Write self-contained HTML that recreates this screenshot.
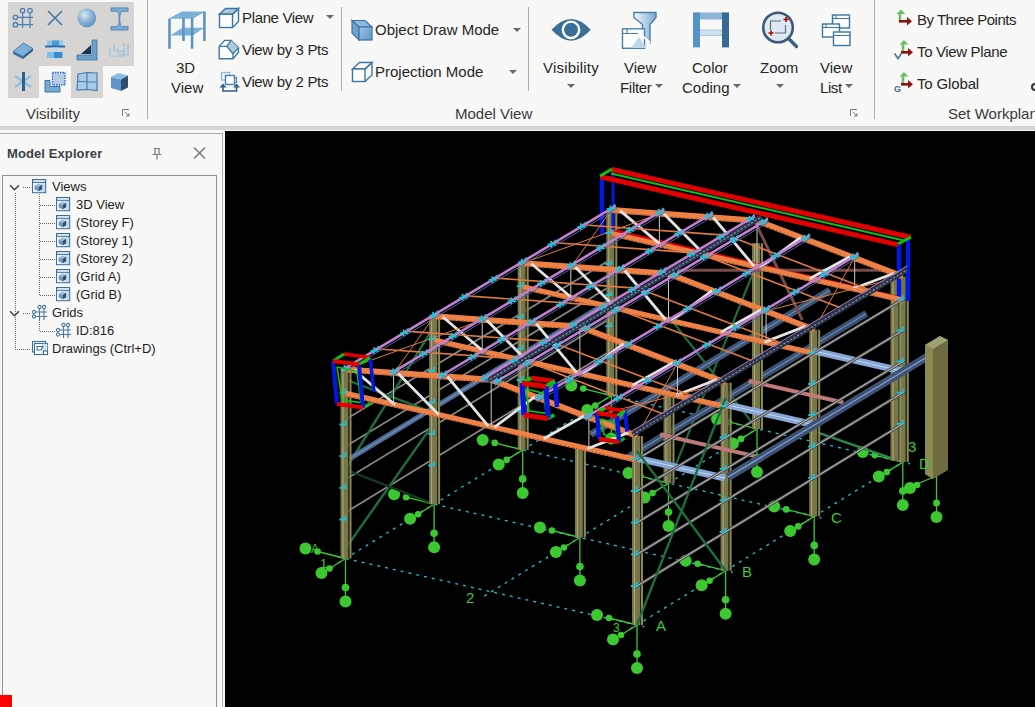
<!DOCTYPE html>
<html><head><meta charset="utf-8">
<style>
*{margin:0;padding:0;box-sizing:border-box}
html,body{width:1035px;height:707px;overflow:hidden;background:#f8f8f6;font-family:"Liberation Sans",sans-serif;color:#262626}
.a{position:absolute;white-space:nowrap}
.t{position:absolute;white-space:nowrap;font-size:15px;line-height:15px;color:#262626}
.lbl{position:absolute;white-space:nowrap;font-size:15px;line-height:15px;color:#3b3b3b}
.sep{position:absolute;width:1px;background:#ababab}
.arr{position:absolute;width:0;height:0;margin-left:-0.5px;border-left:4px solid transparent;border-right:4px solid transparent;border-top:4.5px solid #6a6a6a}
svg{position:absolute;overflow:visible}
</style></head><body>
<!-- RIBBON -->
<div class="a" style="left:0;top:0;width:1035px;height:126px;background:#f8f8f6"></div>
<div class="a" style="left:0;top:126px;width:1035px;height:4px;background:#d5d5d4"></div>
<!-- visibility gray grid -->
<div class="a" style="left:8px;top:2px;width:126px;height:64px;background:#d6d5d4"></div>
<div class="a" style="left:8px;top:66px;width:31px;height:32px;background:#d6d5d4"></div>
<div class="a" style="left:71px;top:66px;width:32px;height:32px;background:#d6d5d4"></div>
<div id="visicons"><svg width="1035" height="130" style="left:0;top:0">
<defs>
<radialGradient id="sph" cx="0.38" cy="0.35" r="0.7"><stop offset="0" stop-color="#dcebf6"/><stop offset="0.5" stop-color="#8fb6d8"/><stop offset="1" stop-color="#5d8fbd"/></radialGradient>
<linearGradient id="cubeg" x1="0" y1="0" x2="1" y2="1"><stop offset="0" stop-color="#9cc4e2"/><stop offset="1" stop-color="#5d94c4"/></linearGradient>
<linearGradient id="fun" x1="0" y1="0" x2="1" y2="0"><stop offset="0" stop-color="#f4f8fb"/><stop offset="0.6" stop-color="#a9c9e2"/><stop offset="1" stop-color="#7aa9d0"/></linearGradient>
</defs>
<!-- grid icon -->
<g stroke="#4c82b2" stroke-width="1.3" fill="none">
<path d="M22.6,12.8v15.2M30,12.8v15.2M17.6,17.3H33M17.6,24.7H33"/>
<circle cx="22.6" cy="10.6" r="2.2"/><circle cx="30" cy="10.6" r="2.2"/>
<circle cx="15.4" cy="17.3" r="2.2"/><circle cx="15.4" cy="24.7" r="2.2"/>
</g>
<!-- X -->
<path d="M48,11L62,25M62,11L48,25" stroke="#3f78a8" stroke-width="1.6"/>
<!-- sphere -->
<circle cx="86.8" cy="17.8" r="9.4" fill="url(#sph)"/>
<!-- I beam -->
<path d="M111,8h17v3.2h-6.2q-2,1.5 -2,6v4q0,4.5 2,5.5h6.2v3.3h-17v-3.3h6.2q2,-1 2,-5.5v-4q0,-4.5 -2,-6h-6.2z" fill="#7eacd4" stroke="#4f86b6" stroke-width="1"/>
<!-- slab -->
<path d="M13,51.5L23.5,43L33,48.5L23,56.5Z" fill="#7fb0d8" stroke="#3f73a0" stroke-width="0.8"/>
<path d="M13,51.5L23,56.5L23,59L13,54Z" fill="#3c6f9e"/>
<path d="M23,56.5L33,48.5L33,51L23,59Z" fill="#2f5f8c"/>
<!-- plate T -->
<rect x="47" y="40.5" width="16" height="6" fill="#8cc4ec"/>
<rect x="52" y="40.5" width="7" height="6" fill="#4a9ad8"/>
<rect x="45" y="45.5" width="20" height="2" fill="#2a6aa6"/>
<rect x="53" y="47.5" width="5" height="12" fill="#b8d8f0"/>
<rect x="47" y="52" width="16" height="6" fill="#7cc0ea"/>
<rect x="54" y="52" width="8" height="6" fill="#3a8ad0"/>
<!-- angle -->
<path d="M92,40h5v20h-20v-5h15z" fill="#6fa0cc" stroke="#3f74a4" stroke-width="0.8"/>
<path d="M81,54L91,45V54Z" fill="#1d3450"/>
<!-- channels -->
<g stroke="#9ec0dc" stroke-width="1.2" fill="none">
<path d="M110,48v8h14v-3M124,47v-4M128,43v12h-6"/>
<path d="M114,45v6h10M118,48v6h6v-6"/>
</g>
<!-- asterisk -->
<path d="M15,76L31,87M15,87L31,76" stroke="#8ec0e2" stroke-width="2.6"/>
<path d="M23.5,72v19" stroke="#2f5e86" stroke-width="3"/>
<!-- L with dotted -->
<path d="M45,80.5h5v6h10v5.5h-15z" fill="#79a9d2" stroke="#3e72a2" stroke-width="1"/>
<rect x="52.5" y="72.5" width="12.5" height="12.5" fill="#b5cde2" stroke="#2a6ad0" stroke-width="1.3" stroke-dasharray="1.5 1"/>
<!-- window panes -->
<path d="M78,74L87,72.5L97,73L97,90.5L87,89.5L77,90Z" fill="#a7cbe6" stroke="#4a7aa8" stroke-width="1.2"/>
<path d="M87,72.5V89.5M77.5,81.5L97,82" stroke="#4a7aa8" stroke-width="1.2"/>
<!-- cube -->
<path d="M111,77L118,73L128,75.5L121,79.5Z" fill="#8cbde0"/>
<path d="M111,77L121,79.5L121,91L111,88Z" fill="#5e97c7"/>
<path d="M121,79.5L128,75.5L128,87.5L121,91Z" fill="#2e4e70"/>

<!-- 3D view big icon -->
<g fill="#5b95c6">
<path d="M168.2,18.8L182,11.4H205.6L192.6,18.8Z" fill="#7bb0d9"/>
<path d="M170.5,35.6L182.2,27.8H204.3L192.6,35.6Z" fill="#7bb0d9"/>
<rect x="182.2" y="18" width="2.6" height="23"/>
<rect x="203.1" y="11.4" width="2.6" height="29.6"/>
<rect x="168.2" y="18.8" width="2.6" height="30"/>
<rect x="190.8" y="18" width="2.6" height="30.7"/>
</g>
<!-- plane view cube -->
<g stroke="#3b76a6" stroke-width="1.4" fill="none">
<path d="M225.5,8.5H238.5L232.5,14.2H219.5Z" fill="#b2cade"/>
<rect x="219.5" y="14.2" width="13" height="13.3" fill="#fff"/>
<path d="M232.5,14.2L238.5,8.5V21.5L232.5,27.5"/>
</g>
<!-- view by 3 pts -->
<path d="M219.2,46.4L224.6,40.4H231L238.5,47.9V52.2L233,58.8H219.2Z" fill="#fff" stroke="#3b76a6" stroke-width="1.4"/>
<path d="M226.8,46.4L231,40.4L238.5,47.9L233,53.8Z" fill="#b2cade"/>
<path d="M219.2,46.4H226.8L233,53.8V58.8M233,53.8L238.5,47.9M226.8,46.4L231,40.4" fill="none" stroke="#3b76a6" stroke-width="1.3"/>
<!-- view by 2 pts -->
<rect x="221.5" y="72.5" width="8" height="7.5" fill="none" stroke="#8fb6d8" stroke-width="1.3"/>
<rect x="225.5" y="75.5" width="9" height="9" fill="#fff" stroke="#4a82b4" stroke-width="1.4"/>
<path d="M234.5,77.5h2v5h-2" fill="none" stroke="#4a82b4" stroke-width="1.2"/>
<path d="M223,86V91H236.5V86" fill="none" stroke="#2f5f88" stroke-width="1.6"/>
<path d="M219.5,87.5L223,83.5L226.5,87.5ZM233,87.5L236.5,83.5L240,87.5Z" fill="#2f5f88"/>
<!-- object draw mode cube -->
<path d="M352,20.5H365L372,27H359Z" fill="#8dbbe0" stroke="#3d75a8" stroke-width="1.2"/>
<path d="M352,20.5L359,27V40L352,33Z" fill="#6ea4d0" stroke="#3d75a8" stroke-width="1.2"/>
<rect x="359" y="27" width="13" height="13" fill="url(#cubeg)" stroke="#3d75a8" stroke-width="1.2"/>
<!-- projection mode cube -->
<g stroke="#3d75a8" stroke-width="1.4" fill="none">
<path d="M352.5,69L359.5,62.5H372L365,69Z" fill="#fff"/>
<rect x="352.5" y="69" width="12.5" height="12.5" fill="#fff"/>
<path d="M365,69L372,62.5V75L365,81.5"/>
</g>
<!-- eye -->
<path d="M551.5,29.8Q571,8 590.8,29.8Q571,51.5 551.5,29.8Z" fill="#3a6f98"/>
<circle cx="571" cy="29.8" r="8.2" fill="none" stroke="#fff" stroke-width="2.4"/>
<circle cx="571" cy="29.8" r="5.3" fill="#3a6f98"/>
<!-- view filter -->
<path d="M634,12.5H656V17.5L650,24.5V42.5L642.5,36V24.5L634,17.5Z" fill="url(#fun)" stroke="#4a80ae" stroke-width="1.4"/>
<rect x="622.5" y="28.8" width="22" height="19.5" fill="#fff" stroke="#4a80ae" stroke-width="1.4"/>
<path d="M622.5,33.5H638M627,28.8V33.5" stroke="#4a80ae" stroke-width="1.2"/>
<path d="M631,48L639,37L646,48Z" fill="#bcd8ec"/>
<path d="M642.5,36L650,42.5" stroke="#fff" stroke-width="2"/>
<!-- color coding -->
<rect x="699" y="12.5" width="24" height="7" fill="#8cb4d6"/>
<rect x="699" y="30" width="24" height="5.5" fill="#cfe0ee" stroke="#9ebfdc" stroke-width="0.8"/>
<rect x="693" y="12.4" width="7" height="35" fill="#5592c8"/>
<rect x="722" y="12.4" width="7" height="35" fill="#3a6a94"/>
<!-- zoom -->
<path d="M787.5,37.5L796.5,46.5" stroke="#3d5f80" stroke-width="3.4" stroke-linecap="round"/>
<circle cx="778" cy="27.5" r="14.8" fill="#dde9f3" stroke="#3d5a78" stroke-width="2.6"/>
<path d="M770.5,30V21H781M785.5,25V33H775" fill="none" stroke="#6b6b6b" stroke-width="1.2"/>
<path d="M783.5,19.5h5M786,17v5M768.5,33h5M771,30.5v5" stroke="#c00000" stroke-width="1.6"/>
<!-- view list -->
<g stroke="#3a75a8" stroke-width="1.4" fill="#fff">
<rect x="832.5" y="15" width="17" height="13"/>
<path d="M832.5,18.5h17M836,15v3.5" fill="none" stroke-width="1"/>
<rect x="822.5" y="24" width="17" height="13"/>
<path d="M822.5,27.5h17M826,24v3.5" fill="none" stroke-width="1"/>
<rect x="833.5" y="32" width="16.5" height="13.5"/>
<path d="M833.5,35.5h16.5" fill="none" stroke-width="1"/>
</g>
<!-- workplane icons -->
<g>
<path d="M900,21.5V13.5" stroke="#6cbf6c" stroke-width="2.6"/><path d="M896.5,14L901,9.5L905.5,14Z" fill="#6cbf6c"/>
<path d="M899,21.3H908" stroke="#8c1212" stroke-width="2.6"/><path d="M907,17L912,21.3L907,25.6Z" fill="#8c1212"/>
<path d="M903,52V44" stroke="#6cbf6c" stroke-width="2.6"/><path d="M899.5,44.5L904,40L908.5,44.5Z" fill="#6cbf6c"/>
<path d="M901,52.3H909" stroke="#8c1212" stroke-width="2.6"/><path d="M908,48L913,52.3L908,56.6Z" fill="#8c1212"/>
<path d="M894.5,53.5L898,58.5L901.5,53.5" stroke="#4676a6" stroke-width="1.6" fill="none"/>
<path d="M903,84V76" stroke="#6cbf6c" stroke-width="2.6"/><path d="M899.5,76.5L904,72L908.5,76.5Z" fill="#6cbf6c"/>
<path d="M901,84.3H909" stroke="#8c1212" stroke-width="2.6"/><path d="M908,80L913,84.3L908,88.6Z" fill="#8c1212"/>
<text x="894" y="91.5" font-size="9" font-weight="bold" fill="#3d6a98" font-family="Liberation Sans">G</text>
</g>
<!-- dialog launchers -->
<g stroke="#7a7a7a" stroke-width="1" fill="none">
<path d="M122.5,116V109.5H129"/><path d="M125,112L129,116M126,116H129V113"/>
<path d="M850.5,116V109.5H857"/><path d="M853,112L857,116M854,116H857V113"/>
</g>
</svg>
</div><!--/icons-->
<div class="lbl" style="left:26px;top:106px">Visibility</div>
<div class="sep" style="left:147px;top:0;height:119px"></div>
<div class="sep" style="left:341px;top:7px;height:84px"></div>
<div class="sep" style="left:528px;top:7px;height:84px"></div>
<div class="sep" style="left:874px;top:0;height:119px"></div>

<div class="t" style="left:176px;top:60px">3D</div>
<div class="t" style="left:171px;top:80px">View</div>
<div class="t" style="left:242px;top:10px;letter-spacing:-0.35px">Plane View</div>
<div class="arr" style="left:326px;top:15px"></div>
<div class="t" style="left:242px;top:42px;letter-spacing:-0.35px">View by 3 Pts</div>
<div class="t" style="left:242px;top:74px;letter-spacing:-0.35px">View by 2 Pts</div>

<div class="t" style="left:375px;top:22px">Object Draw Mode</div>
<div class="arr" style="left:513px;top:28px"></div>
<div class="t" style="left:375px;top:64px">Projection Mode</div>
<div class="arr" style="left:509px;top:70px"></div>
<div class="lbl" style="left:455px;top:106px">Model View</div>

<div class="t" style="left:543px;top:60px;letter-spacing:0.2px">Visibility</div>
<div class="arr" style="left:567px;top:84px"></div>
<div class="t" style="left:624px;top:60px">View</div>
<div class="t" style="left:620px;top:80px;letter-spacing:-0.3px">Filter</div>
<div class="arr" style="left:655px;top:84px"></div>
<div class="t" style="left:692px;top:60px">Color</div>
<div class="t" style="left:682px;top:80px">Coding</div>
<div class="arr" style="left:733px;top:84px"></div>
<div class="t" style="left:760px;top:60px">Zoom</div>
<div class="arr" style="left:776px;top:84px"></div>
<div class="t" style="left:820px;top:60px">View</div>
<div class="t" style="left:820px;top:80px;letter-spacing:-0.4px">List</div>
<div class="arr" style="left:845px;top:84px"></div>

<div class="t" style="left:917px;top:12px;letter-spacing:-0.5px">By Three Points</div>
<div class="t" style="left:917px;top:44px;letter-spacing:-0.35px">To View Plane</div>
<div class="t" style="left:917px;top:76px;letter-spacing:-0.15px">To Global</div>
<div class="lbl" style="left:948px;top:106px">Set Workplane</div>
<div class="a" style="left:1031px;top:83px;width:8px;height:8px;border:2px solid #333;border-radius:50%"></div>

<!-- EXPLORER -->
<div class="a" style="left:0;top:133px;width:223px;height:574px;border-top:1px solid #a9a9a9;border-right:1px solid #b0b0b0"></div>
<div class="a" style="left:7px;top:146px;font-size:13px;font-weight:bold;color:#3b414a;letter-spacing:0.1px">Model Explorer</div>
<div class="a" style="left:2px;top:175px;width:215px;height:540px;border:1px solid #8d9096;background:#f8f8f6"></div>
<div id="tree"><svg width="230" height="380" style="left:0;top:0"><defs><linearGradient id="tvg" x1="0" y1="0" x2="1" y2="0"><stop offset="0" stop-color="#fff"/><stop offset="1" stop-color="#bcd6ea"/></linearGradient></defs><path d="M10,185.2L14.5,189.7L19,185.2" stroke="#444" stroke-width="1.5" fill="none"/>
<path d="M23,187.5H31" stroke="#6a6a6a" stroke-width="1" stroke-dasharray="1 1"/>
<g transform="translate(32,179.0)">
<rect x="0.6" y="0.6" width="13" height="13" fill="#fff" stroke="#3b6f99" stroke-width="1.2"/>
<rect x="1.2" y="3.6" width="12" height="9.6" fill="url(#tvg)"/>
<path d="M1,3.3H13.4" stroke="#3b6f99" stroke-width="1.1"/>
<path d="M2.6,6.6L6.2,4.6L10.2,5.8L6.6,7.9Z" fill="#9cbdd8"/>
<path d="M2.6,6.6L6.6,7.9V12.2L2.6,10.6Z" fill="#6a98bf"/>
<path d="M6.6,7.9L10.2,5.8V10.2L6.6,12.2Z" fill="#2f4d6c"/>
</g>
<path d="M40,205.5H55" stroke="#6a6a6a" stroke-width="1" stroke-dasharray="1 1"/>
<g transform="translate(56,197.0)">
<rect x="0.6" y="0.6" width="13" height="13" fill="#fff" stroke="#3b6f99" stroke-width="1.2"/>
<rect x="1.2" y="3.6" width="12" height="9.6" fill="url(#tvg)"/>
<path d="M1,3.3H13.4" stroke="#3b6f99" stroke-width="1.1"/>
<path d="M2.6,6.6L6.2,4.6L10.2,5.8L6.6,7.9Z" fill="#9cbdd8"/>
<path d="M2.6,6.6L6.6,7.9V12.2L2.6,10.6Z" fill="#6a98bf"/>
<path d="M6.6,7.9L10.2,5.8V10.2L6.6,12.2Z" fill="#2f4d6c"/>
</g>
<path d="M40,223.5H55" stroke="#6a6a6a" stroke-width="1" stroke-dasharray="1 1"/>
<g transform="translate(56,215.0)">
<rect x="0.6" y="0.6" width="13" height="13" fill="#fff" stroke="#3b6f99" stroke-width="1.2"/>
<rect x="1.2" y="3.6" width="12" height="9.6" fill="url(#tvg)"/>
<path d="M1,3.3H13.4" stroke="#3b6f99" stroke-width="1.1"/>
<path d="M2.6,6.6L6.2,4.6L10.2,5.8L6.6,7.9Z" fill="#9cbdd8"/>
<path d="M2.6,6.6L6.6,7.9V12.2L2.6,10.6Z" fill="#6a98bf"/>
<path d="M6.6,7.9L10.2,5.8V10.2L6.6,12.2Z" fill="#2f4d6c"/>
</g>
<path d="M40,241.5H55" stroke="#6a6a6a" stroke-width="1" stroke-dasharray="1 1"/>
<g transform="translate(56,233.0)">
<rect x="0.6" y="0.6" width="13" height="13" fill="#fff" stroke="#3b6f99" stroke-width="1.2"/>
<rect x="1.2" y="3.6" width="12" height="9.6" fill="url(#tvg)"/>
<path d="M1,3.3H13.4" stroke="#3b6f99" stroke-width="1.1"/>
<path d="M2.6,6.6L6.2,4.6L10.2,5.8L6.6,7.9Z" fill="#9cbdd8"/>
<path d="M2.6,6.6L6.6,7.9V12.2L2.6,10.6Z" fill="#6a98bf"/>
<path d="M6.6,7.9L10.2,5.8V10.2L6.6,12.2Z" fill="#2f4d6c"/>
</g>
<path d="M40,259.5H55" stroke="#6a6a6a" stroke-width="1" stroke-dasharray="1 1"/>
<g transform="translate(56,251.0)">
<rect x="0.6" y="0.6" width="13" height="13" fill="#fff" stroke="#3b6f99" stroke-width="1.2"/>
<rect x="1.2" y="3.6" width="12" height="9.6" fill="url(#tvg)"/>
<path d="M1,3.3H13.4" stroke="#3b6f99" stroke-width="1.1"/>
<path d="M2.6,6.6L6.2,4.6L10.2,5.8L6.6,7.9Z" fill="#9cbdd8"/>
<path d="M2.6,6.6L6.6,7.9V12.2L2.6,10.6Z" fill="#6a98bf"/>
<path d="M6.6,7.9L10.2,5.8V10.2L6.6,12.2Z" fill="#2f4d6c"/>
</g>
<path d="M40,277.5H55" stroke="#6a6a6a" stroke-width="1" stroke-dasharray="1 1"/>
<g transform="translate(56,269.0)">
<rect x="0.6" y="0.6" width="13" height="13" fill="#fff" stroke="#3b6f99" stroke-width="1.2"/>
<rect x="1.2" y="3.6" width="12" height="9.6" fill="url(#tvg)"/>
<path d="M1,3.3H13.4" stroke="#3b6f99" stroke-width="1.1"/>
<path d="M2.6,6.6L6.2,4.6L10.2,5.8L6.6,7.9Z" fill="#9cbdd8"/>
<path d="M2.6,6.6L6.6,7.9V12.2L2.6,10.6Z" fill="#6a98bf"/>
<path d="M6.6,7.9L10.2,5.8V10.2L6.6,12.2Z" fill="#2f4d6c"/>
</g>
<path d="M40,295.5H55" stroke="#6a6a6a" stroke-width="1" stroke-dasharray="1 1"/>
<g transform="translate(56,287.0)">
<rect x="0.6" y="0.6" width="13" height="13" fill="#fff" stroke="#3b6f99" stroke-width="1.2"/>
<rect x="1.2" y="3.6" width="12" height="9.6" fill="url(#tvg)"/>
<path d="M1,3.3H13.4" stroke="#3b6f99" stroke-width="1.1"/>
<path d="M2.6,6.6L6.2,4.6L10.2,5.8L6.6,7.9Z" fill="#9cbdd8"/>
<path d="M2.6,6.6L6.6,7.9V12.2L2.6,10.6Z" fill="#6a98bf"/>
<path d="M6.6,7.9L10.2,5.8V10.2L6.6,12.2Z" fill="#2f4d6c"/>
</g>
<path d="M10,311.2L14.5,315.7L19,311.2" stroke="#444" stroke-width="1.5" fill="none"/>
<path d="M23,313.5H31" stroke="#6a6a6a" stroke-width="1" stroke-dasharray="1 1"/>
<g transform="translate(32,305.0)" stroke="#4a78a4" stroke-width="1.1" fill="none">
<path d="M7.5,3V15M12,3V15M4,7H15M4,11.5H15"/>
<circle cx="7.5" cy="2" r="1.6"/><circle cx="12" cy="2" r="1.6"/><circle cx="2" cy="7" r="1.6"/><circle cx="2" cy="11.5" r="1.6"/>
</g>
<path d="M40,331.5H55" stroke="#6a6a6a" stroke-width="1" stroke-dasharray="1 1"/>
<g transform="translate(56,323.0)" stroke="#4a78a4" stroke-width="1.1" fill="none">
<path d="M7.5,3V15M12,3V15M4,7H15M4,11.5H15"/>
<circle cx="7.5" cy="2" r="1.6"/><circle cx="12" cy="2" r="1.6"/><circle cx="2" cy="7" r="1.6"/><circle cx="2" cy="11.5" r="1.6"/>
</g>
<path d="M15,349.5H31" stroke="#6a6a6a" stroke-width="1" stroke-dasharray="1 1"/>
<g transform="translate(32,341.0)" stroke="#3b6f99" stroke-width="1.1" fill="none">
<rect x="0.5" y="0.5" width="13" height="10.5"/>
<rect x="2.5" y="2.5" width="13" height="11" fill="#fff"/>
<rect x="9.5" y="2.8" width="5.8" height="10.4" fill="#cfe3f1" stroke="none"/>
<path d="M5,5.5H11L9,9H5Z"/>
<rect x="11.5" y="10" width="4" height="3.5" fill="#fff"/>
</g>
<path d="M15.5,193V349" stroke="#6a6a6a" stroke-width="1" stroke-dasharray="1 1"/>
<path d="M39.5,194V295" stroke="#6a6a6a" stroke-width="1" stroke-dasharray="1 1"/>
<path d="M39.5,320V331" stroke="#6a6a6a" stroke-width="1" stroke-dasharray="1 1"/></svg><div class="a" style="left:52px;top:177.5px;font-size:13px;line-height:18px;color:#1e1e1e">Views</div>
<div class="a" style="left:76px;top:195.5px;font-size:13px;line-height:18px;color:#1e1e1e">3D View</div>
<div class="a" style="left:76px;top:213.5px;font-size:13px;line-height:18px;color:#1e1e1e">(Storey F)</div>
<div class="a" style="left:76px;top:231.5px;font-size:13px;line-height:18px;color:#1e1e1e">(Storey 1)</div>
<div class="a" style="left:76px;top:249.5px;font-size:13px;line-height:18px;color:#1e1e1e">(Storey 2)</div>
<div class="a" style="left:76px;top:267.5px;font-size:13px;line-height:18px;color:#1e1e1e">(Grid A)</div>
<div class="a" style="left:76px;top:285.5px;font-size:13px;line-height:18px;color:#1e1e1e">(Grid B)</div>
<div class="a" style="left:52px;top:303.5px;font-size:13px;line-height:18px;color:#1e1e1e">Grids</div>
<div class="a" style="left:76px;top:321.5px;font-size:13px;line-height:18px;color:#1e1e1e">ID:816</div>
<div class="a" style="left:52px;top:339.5px;font-size:13px;line-height:18px;color:#1e1e1e">Drawings (Ctrl+D)</div><svg width="230" height="170" style="left:0;top:0">
<g stroke="#7a7a7a" stroke-width="1.2" fill="none">
<path d="M154,148.5H160M155,148.5V154.5M159,148.5V154.5M152.5,154.5H161.5M157,154.5V159.5"/>
<path d="M194,147.5L205,158.5M205,147.5L194,158.5" stroke-width="1.6"/>
</g></svg></div><!--/tree-->
<div class="a" style="left:0;top:695px;width:12px;height:12px;background:#ff0000"></div>

<!-- VIEWPORT -->
<div class="a" style="left:225px;top:131px;width:810px;height:576px;background:#000"></div>
<div id="model"><svg width="1035" height="707" style="left:0;top:0"><defs><clipPath id="vp"><rect x="225" y="131" width="810" height="576"/></clipPath></defs><g clip-path="url(#vp)" stroke-linecap="butt"><line x1="338.2" y1="556.8" x2="644.3" y2="626.7" stroke="#19c3d8" stroke-width="1.3" stroke-dasharray="3 5"/>
<line x1="426.8" y1="502.5" x2="732.9" y2="572.4" stroke="#19c3d8" stroke-width="1.3" stroke-dasharray="3 5"/>
<line x1="515.4" y1="448.2" x2="821.5" y2="518.1" stroke="#19c3d8" stroke-width="1.3" stroke-dasharray="3 5"/>
<line x1="604.0" y1="393.9" x2="910.1" y2="463.8" stroke="#19c3d8" stroke-width="1.3" stroke-dasharray="3 5"/>
<line x1="338.4" y1="562.8" x2="615.7" y2="392.9" stroke="#19c3d8" stroke-width="1.3" stroke-dasharray="3 5"/>
<line x1="484.2" y1="596.1" x2="761.5" y2="426.1" stroke="#19c3d8" stroke-width="1.3" stroke-dasharray="3 5"/>
<line x1="629.9" y1="629.3" x2="907.2" y2="459.4" stroke="#19c3d8" stroke-width="1.3" stroke-dasharray="3 5"/>
<line x1="611.3" y1="395.6" x2="583.3" y2="388.6" stroke="#3cc830" stroke-width="1.3"/>
<circle cx="583.3" cy="388.6" r="3.3" fill="#3cc830"/>
<circle cx="571.3" cy="385.6" r="6" fill="#3cc830"/>
<line x1="611.3" y1="395.6" x2="595.3" y2="405.6" stroke="#3cc830" stroke-width="1.3"/>
<circle cx="595.3" cy="405.6" r="3.3" fill="#3cc830"/>
<circle cx="587.3" cy="410.1" r="6" fill="#3cc830"/>
<line x1="611.3" y1="395.6" x2="611.3" y2="438.6" stroke="#3cc830" stroke-width="1.3"/>
<circle cx="611.3" cy="424.6" r="3.8" fill="#3cc830"/>
<circle cx="611.3" cy="438.6" r="6" fill="#3cc830"/>
<line x1="757.0" y1="428.9" x2="729.0" y2="421.9" stroke="#3cc830" stroke-width="1.3"/>
<circle cx="729.0" cy="421.9" r="3.3" fill="#3cc830"/>
<circle cx="717.0" cy="418.9" r="6" fill="#3cc830"/>
<line x1="757.0" y1="428.9" x2="741.0" y2="438.9" stroke="#3cc830" stroke-width="1.3"/>
<circle cx="741.0" cy="438.9" r="3.3" fill="#3cc830"/>
<circle cx="733.0" cy="443.4" r="6" fill="#3cc830"/>
<line x1="757.0" y1="428.9" x2="757.0" y2="471.9" stroke="#3cc830" stroke-width="1.3"/>
<circle cx="757.0" cy="457.9" r="3.8" fill="#3cc830"/>
<circle cx="757.0" cy="471.9" r="6" fill="#3cc830"/>
<line x1="902.8" y1="462.1" x2="874.8" y2="455.1" stroke="#3cc830" stroke-width="1.3"/>
<circle cx="874.8" cy="455.1" r="3.3" fill="#3cc830"/>
<circle cx="862.8" cy="452.1" r="6" fill="#3cc830"/>
<line x1="902.8" y1="462.1" x2="886.8" y2="472.1" stroke="#3cc830" stroke-width="1.3"/>
<circle cx="886.8" cy="472.1" r="3.3" fill="#3cc830"/>
<circle cx="878.8" cy="476.6" r="6" fill="#3cc830"/>
<line x1="902.8" y1="462.1" x2="902.8" y2="505.1" stroke="#3cc830" stroke-width="1.3"/>
<circle cx="902.8" cy="491.1" r="3.8" fill="#3cc830"/>
<circle cx="902.8" cy="505.1" r="6" fill="#3cc830"/>
<line x1="522.7" y1="449.9" x2="494.7" y2="442.9" stroke="#3cc830" stroke-width="1.3"/>
<circle cx="494.7" cy="442.9" r="3.3" fill="#3cc830"/>
<circle cx="482.7" cy="439.9" r="6" fill="#3cc830"/>
<line x1="522.7" y1="449.9" x2="506.7" y2="459.9" stroke="#3cc830" stroke-width="1.3"/>
<circle cx="506.7" cy="459.9" r="3.3" fill="#3cc830"/>
<circle cx="498.7" cy="464.4" r="6" fill="#3cc830"/>
<line x1="522.7" y1="449.9" x2="522.7" y2="492.9" stroke="#3cc830" stroke-width="1.3"/>
<circle cx="522.7" cy="478.9" r="3.8" fill="#3cc830"/>
<circle cx="522.7" cy="492.9" r="6" fill="#3cc830"/>
<line x1="668.5" y1="483.1" x2="640.5" y2="476.1" stroke="#3cc830" stroke-width="1.3"/>
<circle cx="640.5" cy="476.1" r="3.3" fill="#3cc830"/>
<circle cx="628.5" cy="473.1" r="6" fill="#3cc830"/>
<line x1="668.5" y1="483.1" x2="652.5" y2="493.1" stroke="#3cc830" stroke-width="1.3"/>
<circle cx="652.5" cy="493.1" r="3.3" fill="#3cc830"/>
<circle cx="644.5" cy="497.6" r="6" fill="#3cc830"/>
<line x1="668.5" y1="483.1" x2="668.5" y2="526.1" stroke="#3cc830" stroke-width="1.3"/>
<circle cx="668.5" cy="512.1" r="3.8" fill="#3cc830"/>
<circle cx="668.5" cy="526.1" r="6" fill="#3cc830"/>
<line x1="814.2" y1="516.4" x2="786.2" y2="509.4" stroke="#3cc830" stroke-width="1.3"/>
<circle cx="786.2" cy="509.4" r="3.3" fill="#3cc830"/>
<circle cx="774.2" cy="506.4" r="6" fill="#3cc830"/>
<line x1="814.2" y1="516.4" x2="798.2" y2="526.4" stroke="#3cc830" stroke-width="1.3"/>
<circle cx="798.2" cy="526.4" r="3.3" fill="#3cc830"/>
<circle cx="790.2" cy="530.9" r="6" fill="#3cc830"/>
<line x1="814.2" y1="516.4" x2="814.2" y2="559.4" stroke="#3cc830" stroke-width="1.3"/>
<circle cx="814.2" cy="545.4" r="3.8" fill="#3cc830"/>
<circle cx="814.2" cy="559.4" r="6" fill="#3cc830"/>
<line x1="434.1" y1="504.2" x2="406.1" y2="497.2" stroke="#3cc830" stroke-width="1.3"/>
<circle cx="406.1" cy="497.2" r="3.3" fill="#3cc830"/>
<circle cx="394.1" cy="494.2" r="6" fill="#3cc830"/>
<line x1="434.1" y1="504.2" x2="418.1" y2="514.2" stroke="#3cc830" stroke-width="1.3"/>
<circle cx="418.1" cy="514.2" r="3.3" fill="#3cc830"/>
<circle cx="410.1" cy="518.7" r="6" fill="#3cc830"/>
<line x1="434.1" y1="504.2" x2="434.1" y2="547.2" stroke="#3cc830" stroke-width="1.3"/>
<circle cx="434.1" cy="533.2" r="3.8" fill="#3cc830"/>
<circle cx="434.1" cy="547.2" r="6" fill="#3cc830"/>
<line x1="579.9" y1="537.5" x2="551.9" y2="530.5" stroke="#3cc830" stroke-width="1.3"/>
<circle cx="551.9" cy="530.5" r="3.3" fill="#3cc830"/>
<circle cx="539.9" cy="527.5" r="6" fill="#3cc830"/>
<line x1="579.9" y1="537.5" x2="563.9" y2="547.5" stroke="#3cc830" stroke-width="1.3"/>
<circle cx="563.9" cy="547.5" r="3.3" fill="#3cc830"/>
<circle cx="555.9" cy="552.0" r="6" fill="#3cc830"/>
<line x1="579.9" y1="537.5" x2="579.9" y2="580.5" stroke="#3cc830" stroke-width="1.3"/>
<circle cx="579.9" cy="566.5" r="3.8" fill="#3cc830"/>
<circle cx="579.9" cy="580.5" r="6" fill="#3cc830"/>
<line x1="725.6" y1="570.7" x2="697.6" y2="563.7" stroke="#3cc830" stroke-width="1.3"/>
<circle cx="697.6" cy="563.7" r="3.3" fill="#3cc830"/>
<circle cx="685.6" cy="560.7" r="6" fill="#3cc830"/>
<line x1="725.6" y1="570.7" x2="709.6" y2="580.7" stroke="#3cc830" stroke-width="1.3"/>
<circle cx="709.6" cy="580.7" r="3.3" fill="#3cc830"/>
<circle cx="701.6" cy="585.2" r="6" fill="#3cc830"/>
<line x1="725.6" y1="570.7" x2="725.6" y2="613.7" stroke="#3cc830" stroke-width="1.3"/>
<circle cx="725.6" cy="599.7" r="3.8" fill="#3cc830"/>
<circle cx="725.6" cy="613.7" r="6" fill="#3cc830"/>
<line x1="345.5" y1="558.5" x2="317.5" y2="551.5" stroke="#3cc830" stroke-width="1.3"/>
<circle cx="317.5" cy="551.5" r="3.3" fill="#3cc830"/>
<circle cx="305.5" cy="548.5" r="6" fill="#3cc830"/>
<line x1="345.5" y1="558.5" x2="329.5" y2="568.5" stroke="#3cc830" stroke-width="1.3"/>
<circle cx="329.5" cy="568.5" r="3.3" fill="#3cc830"/>
<circle cx="321.5" cy="573.0" r="6" fill="#3cc830"/>
<line x1="345.5" y1="558.5" x2="345.5" y2="601.5" stroke="#3cc830" stroke-width="1.3"/>
<circle cx="345.5" cy="587.5" r="3.8" fill="#3cc830"/>
<circle cx="345.5" cy="601.5" r="6" fill="#3cc830"/>
<line x1="637.0" y1="625.0" x2="609.0" y2="618.0" stroke="#3cc830" stroke-width="1.3"/>
<circle cx="609.0" cy="618.0" r="3.3" fill="#3cc830"/>
<circle cx="597.0" cy="615.0" r="6" fill="#3cc830"/>
<line x1="637.0" y1="625.0" x2="621.0" y2="635.0" stroke="#3cc830" stroke-width="1.3"/>
<circle cx="621.0" cy="635.0" r="3.3" fill="#3cc830"/>
<circle cx="613.0" cy="639.5" r="6" fill="#3cc830"/>
<line x1="637.0" y1="625.0" x2="637.0" y2="668.0" stroke="#3cc830" stroke-width="1.3"/>
<circle cx="637.0" cy="654.0" r="3.8" fill="#3cc830"/>
<circle cx="637.0" cy="668.0" r="6" fill="#3cc830"/>
<line x1="936.5" y1="476.0" x2="936.5" y2="517.0" stroke="#3cc830" stroke-width="1.3"/>
<circle cx="936.5" cy="503.0" r="3.5" fill="#3cc830"/>
<circle cx="936.5" cy="517.0" r="6" fill="#3cc830"/>
<line x1="936.5" y1="476.0" x2="912.0" y2="486.0" stroke="#3cc830" stroke-width="1.3"/>
<circle cx="917.0" cy="485.0" r="3.3" fill="#3cc830"/>
<circle cx="910.0" cy="488.0" r="6" fill="#3cc830"/>
<line x1="345.5" y1="512.5" x2="611.3" y2="350.4" stroke="#5e5e5e" stroke-width="2"/>
<line x1="345.5" y1="512.5" x2="611.3" y2="350.4" stroke="#a8a8a8" stroke-width="0.8"/>
<line x1="345.5" y1="479.5" x2="611.3" y2="318.0" stroke="#5e5e5e" stroke-width="2"/>
<line x1="345.5" y1="479.5" x2="611.3" y2="318.0" stroke="#a8a8a8" stroke-width="0.8"/>
<line x1="345.5" y1="446.5" x2="611.3" y2="285.6" stroke="#5e5e5e" stroke-width="2"/>
<line x1="345.5" y1="446.5" x2="611.3" y2="285.6" stroke="#a8a8a8" stroke-width="0.8"/>
<line x1="345.5" y1="419.5" x2="611.3" y2="259.1" stroke="#5e5e5e" stroke-width="2"/>
<line x1="345.5" y1="419.5" x2="611.3" y2="259.1" stroke="#a8a8a8" stroke-width="0.8"/>
<line x1="345.5" y1="548.5" x2="434.1" y2="422.7" stroke="#1d6e3c" stroke-width="2.4"/>
<line x1="345.5" y1="469.5" x2="434.1" y2="326.3" stroke="#1d6e3c" stroke-width="2.4"/>
<line x1="345.5" y1="379.5" x2="434.1" y2="412.8" stroke="#1d6e3c" stroke-width="2.4"/>
<line x1="345.5" y1="469.5" x2="434.1" y2="504.2" stroke="#163a22" stroke-width="2.4"/>
<line x1="349.9" y1="458.5" x2="615.7" y2="297.4" stroke="#4f6a92" stroke-width="5"/>
<line x1="349.9" y1="458.5" x2="615.7" y2="297.4" stroke="#8aa8d0" stroke-width="0.8"/>
<line x1="814.2" y1="431.4" x2="902.8" y2="462.1" stroke="#2a8a50" stroke-width="2.2"/>
<line x1="668.5" y1="483.1" x2="757.0" y2="262.9" stroke="#1d6e3c" stroke-width="2.2"/>
<line x1="668.5" y1="316.2" x2="757.0" y2="428.9" stroke="#1d6e3c" stroke-width="2.2"/>
<line x1="590.7" y1="434.4" x2="829.9" y2="290.3" stroke="#3f5576" stroke-width="7"/>
<line x1="590.7" y1="434.4" x2="829.9" y2="290.3" stroke="#7f9ac4" stroke-width="1"/>
<line x1="627.1" y1="457.7" x2="866.4" y2="313.4" stroke="#3b5070" stroke-width="7"/>
<line x1="627.1" y1="457.7" x2="866.4" y2="313.4" stroke="#7f9ac4" stroke-width="1"/>
<polygon points="606.3,395.6 614.3,395.6 614.3,210.0 606.3,210.0" fill="#77764a" stroke="none" stroke-width="1"/>
<line x1="608.8" y1="395.6" x2="608.8" y2="210.0" stroke="#b0ad78" stroke-width="1"/>
<line x1="614.8" y1="395.6" x2="614.8" y2="210.0" stroke="#23230f" stroke-width="1"/>
<line x1="616.3" y1="395.6" x2="616.3" y2="210.0" stroke="#8a8858" stroke-width="2"/>
<polygon points="752.0,428.9 760.0,428.9 760.0,243.3 752.0,243.3" fill="#77764a" stroke="none" stroke-width="1"/>
<line x1="754.5" y1="428.9" x2="754.5" y2="243.3" stroke="#b0ad78" stroke-width="1"/>
<line x1="760.5" y1="428.9" x2="760.5" y2="243.3" stroke="#23230f" stroke-width="1"/>
<line x1="762.0" y1="428.9" x2="762.0" y2="243.3" stroke="#8a8858" stroke-width="2"/>
<polygon points="897.8,462.1 905.8,462.1 905.8,276.5 897.8,276.5" fill="#77764a" stroke="none" stroke-width="1"/>
<line x1="900.3" y1="462.1" x2="900.3" y2="276.5" stroke="#b0ad78" stroke-width="1"/>
<line x1="906.3" y1="462.1" x2="906.3" y2="276.5" stroke="#23230f" stroke-width="1"/>
<line x1="907.8" y1="462.1" x2="907.8" y2="276.5" stroke="#8a8858" stroke-width="2"/>
<polygon points="517.7,449.9 525.7,449.9 525.7,263.2 517.7,263.2" fill="#77764a" stroke="none" stroke-width="1"/>
<line x1="520.2" y1="449.9" x2="520.2" y2="263.2" stroke="#b0ad78" stroke-width="1"/>
<line x1="526.2" y1="449.9" x2="526.2" y2="263.2" stroke="#23230f" stroke-width="1"/>
<line x1="527.7" y1="449.9" x2="527.7" y2="263.2" stroke="#8a8858" stroke-width="2"/>
<polygon points="663.5,483.1 671.5,483.1 671.5,392.3 663.5,392.3" fill="#77764a" stroke="none" stroke-width="1"/>
<line x1="666.0" y1="483.1" x2="666.0" y2="392.3" stroke="#b0ad78" stroke-width="1"/>
<line x1="672.0" y1="483.1" x2="672.0" y2="392.3" stroke="#23230f" stroke-width="1"/>
<line x1="673.5" y1="483.1" x2="673.5" y2="392.3" stroke="#8a8858" stroke-width="2"/>
<polygon points="809.2,516.4 817.2,516.4 817.2,329.7 809.2,329.7" fill="#77764a" stroke="none" stroke-width="1"/>
<line x1="811.7" y1="516.4" x2="811.7" y2="329.7" stroke="#b0ad78" stroke-width="1"/>
<line x1="817.7" y1="516.4" x2="817.7" y2="329.7" stroke="#23230f" stroke-width="1"/>
<line x1="819.2" y1="516.4" x2="819.2" y2="329.7" stroke="#8a8858" stroke-width="2"/>
<polygon points="429.1,504.2 437.1,504.2 437.1,316.3 429.1,316.3" fill="#77764a" stroke="none" stroke-width="1"/>
<line x1="431.6" y1="504.2" x2="431.6" y2="316.3" stroke="#b0ad78" stroke-width="1"/>
<line x1="437.6" y1="504.2" x2="437.6" y2="316.3" stroke="#23230f" stroke-width="1"/>
<line x1="439.1" y1="504.2" x2="439.1" y2="316.3" stroke="#8a8858" stroke-width="2"/>
<polygon points="574.9,537.5 582.9,537.5 582.9,446.0 574.9,446.0" fill="#77764a" stroke="none" stroke-width="1"/>
<line x1="577.4" y1="537.5" x2="577.4" y2="446.0" stroke="#b0ad78" stroke-width="1"/>
<line x1="583.4" y1="537.5" x2="583.4" y2="446.0" stroke="#23230f" stroke-width="1"/>
<line x1="584.9" y1="537.5" x2="584.9" y2="446.0" stroke="#8a8858" stroke-width="2"/>
<polygon points="720.6,570.7 728.6,570.7 728.6,382.8 720.6,382.8" fill="#77764a" stroke="none" stroke-width="1"/>
<line x1="723.1" y1="570.7" x2="723.1" y2="382.8" stroke="#b0ad78" stroke-width="1"/>
<line x1="729.1" y1="570.7" x2="729.1" y2="382.8" stroke="#23230f" stroke-width="1"/>
<line x1="730.6" y1="570.7" x2="730.6" y2="382.8" stroke="#8a8858" stroke-width="2"/>
<polygon points="340.5,558.5 348.5,558.5 348.5,369.5 340.5,369.5" fill="#77764a" stroke="none" stroke-width="1"/>
<line x1="343.0" y1="558.5" x2="343.0" y2="369.5" stroke="#b0ad78" stroke-width="1"/>
<line x1="349.0" y1="558.5" x2="349.0" y2="369.5" stroke="#23230f" stroke-width="1"/>
<line x1="350.5" y1="558.5" x2="350.5" y2="369.5" stroke="#8a8858" stroke-width="2"/>
<polygon points="632.0,625.0 640.0,625.0 640.0,436.0 632.0,436.0" fill="#77764a" stroke="none" stroke-width="1"/>
<line x1="634.5" y1="625.0" x2="634.5" y2="436.0" stroke="#b0ad78" stroke-width="1"/>
<line x1="640.5" y1="625.0" x2="640.5" y2="436.0" stroke="#23230f" stroke-width="1"/>
<line x1="642.0" y1="625.0" x2="642.0" y2="436.0" stroke="#8a8858" stroke-width="2"/>
<polygon points="890.5,460.4 898.5,460.4 898.5,274.8 890.5,274.8" fill="#77764a" stroke="none" stroke-width="1"/>
<line x1="893.0" y1="460.4" x2="893.0" y2="274.8" stroke="#b0ad78" stroke-width="1"/>
<line x1="899.0" y1="460.4" x2="899.0" y2="274.8" stroke="#23230f" stroke-width="1"/>
<line x1="900.5" y1="460.4" x2="900.5" y2="274.8" stroke="#8a8858" stroke-width="2"/>
<line x1="615.0" y1="232.0" x2="896.0" y2="298.0" stroke="#e00000" stroke-width="5"/>
<line x1="602.0" y1="177.0" x2="602.0" y2="235.0" stroke="#0018e0" stroke-width="4.5"/>
<line x1="613.0" y1="170.0" x2="613.0" y2="232.0" stroke="#0018e0" stroke-width="3"/>
<line x1="899.0" y1="245.0" x2="899.0" y2="298.0" stroke="#0018e0" stroke-width="4.5"/>
<line x1="908.0" y1="238.0" x2="908.0" y2="301.0" stroke="#0018e0" stroke-width="4.5"/>
<line x1="611.4" y1="169.4" x2="910.6" y2="237.3" stroke="#e00000" stroke-width="5"/>
<line x1="600.4" y1="176.7" x2="897.7" y2="244.6" stroke="#e00000" stroke-width="5"/>
<line x1="611.0" y1="173.5" x2="904.0" y2="240.5" stroke="#10c010" stroke-width="1.8"/>
<line x1="600.0" y1="176.0" x2="612.0" y2="169.0" stroke="#10c010" stroke-width="3"/>
<line x1="898.0" y1="244.0" x2="911.0" y2="237.0" stroke="#10c010" stroke-width="3"/>
<line x1="754.6" y1="220.8" x2="802.3" y2="319.9" stroke="#7a4a4a" stroke-width="3"/>
<line x1="677.5" y1="270.3" x2="890.4" y2="270.3" stroke="#7a4a4a" stroke-width="3"/>
<line x1="611.3" y1="210.0" x2="757.0" y2="220.7" stroke="#ee8246" stroke-width="6"/>
<line x1="611.3" y1="212.5" x2="757.0" y2="223.1" stroke="#a8552a" stroke-width="1" stroke-dasharray="2 2"/>
<line x1="757.0" y1="220.7" x2="902.8" y2="276.5" stroke="#ee8246" stroke-width="6"/>
<line x1="757.0" y1="223.1" x2="902.8" y2="279.0" stroke="#a8552a" stroke-width="1" stroke-dasharray="2 2"/>
<line x1="611.3" y1="233.6" x2="902.8" y2="300.1" stroke="#ee8246" stroke-width="5.5"/>
<line x1="611.3" y1="235.7" x2="902.8" y2="302.2" stroke="#a8552a" stroke-width="1" stroke-dasharray="2 2"/>
<line x1="620.0" y1="210.6" x2="660.9" y2="244.9" stroke="#e4e4e4" stroke-width="2.8"/>
<line x1="894.1" y1="273.2" x2="853.2" y2="288.8" stroke="#e4e4e4" stroke-width="2.8"/>
<line x1="663.8" y1="213.8" x2="704.6" y2="254.8" stroke="#e4e4e4" stroke-width="2.8"/>
<line x1="850.3" y1="256.4" x2="809.5" y2="278.8" stroke="#e4e4e4" stroke-width="2.8"/>
<line x1="713.3" y1="217.5" x2="754.1" y2="266.2" stroke="#e4e4e4" stroke-width="2.8"/>
<line x1="800.8" y1="237.4" x2="760.0" y2="267.5" stroke="#e4e4e4" stroke-width="2.8"/>
<line x1="659.4" y1="213.5" x2="659.4" y2="244.5" stroke="#c8c8c8" stroke-width="1"/>
<line x1="757.0" y1="220.7" x2="757.0" y2="266.8" stroke="#c8c8c8" stroke-width="1"/>
<line x1="854.7" y1="258.1" x2="854.7" y2="289.1" stroke="#c8c8c8" stroke-width="1"/>
<line x1="522.7" y1="263.2" x2="668.5" y2="273.7" stroke="#ee8246" stroke-width="6"/>
<line x1="522.7" y1="265.6" x2="668.5" y2="276.2" stroke="#a8552a" stroke-width="1" stroke-dasharray="2 2"/>
<line x1="668.5" y1="273.7" x2="814.2" y2="329.7" stroke="#ee8246" stroke-width="6"/>
<line x1="668.5" y1="276.2" x2="814.2" y2="332.1" stroke="#a8552a" stroke-width="1" stroke-dasharray="2 2"/>
<line x1="522.7" y1="286.9" x2="814.2" y2="353.4" stroke="#ee8246" stroke-width="5.5"/>
<line x1="522.7" y1="289.1" x2="814.2" y2="355.6" stroke="#a8552a" stroke-width="1" stroke-dasharray="2 2"/>
<line x1="531.4" y1="263.8" x2="572.3" y2="298.2" stroke="#e4e4e4" stroke-width="2.8"/>
<line x1="805.5" y1="326.3" x2="764.6" y2="342.1" stroke="#e4e4e4" stroke-width="2.8"/>
<line x1="575.2" y1="267.0" x2="616.0" y2="308.2" stroke="#e4e4e4" stroke-width="2.8"/>
<line x1="761.7" y1="309.5" x2="720.9" y2="332.1" stroke="#e4e4e4" stroke-width="2.8"/>
<line x1="624.7" y1="270.5" x2="665.5" y2="319.5" stroke="#e4e4e4" stroke-width="2.8"/>
<line x1="712.2" y1="290.5" x2="671.4" y2="320.8" stroke="#e4e4e4" stroke-width="2.8"/>
<line x1="570.8" y1="266.6" x2="570.8" y2="297.9" stroke="#c8c8c8" stroke-width="1"/>
<line x1="668.5" y1="273.7" x2="668.5" y2="320.1" stroke="#c8c8c8" stroke-width="1"/>
<line x1="766.1" y1="311.2" x2="766.1" y2="342.4" stroke="#c8c8c8" stroke-width="1"/>
<line x1="434.1" y1="316.3" x2="579.9" y2="326.7" stroke="#ee8246" stroke-width="6"/>
<line x1="434.1" y1="318.8" x2="579.9" y2="329.2" stroke="#a8552a" stroke-width="1" stroke-dasharray="2 2"/>
<line x1="579.9" y1="326.7" x2="725.6" y2="382.8" stroke="#ee8246" stroke-width="6"/>
<line x1="579.9" y1="329.2" x2="725.6" y2="385.3" stroke="#a8552a" stroke-width="1" stroke-dasharray="2 2"/>
<line x1="434.1" y1="340.2" x2="725.6" y2="406.7" stroke="#ee8246" stroke-width="5.5"/>
<line x1="434.1" y1="342.4" x2="725.6" y2="408.9" stroke="#a8552a" stroke-width="1" stroke-dasharray="2 2"/>
<line x1="442.8" y1="317.0" x2="483.7" y2="351.5" stroke="#e4e4e4" stroke-width="2.8"/>
<line x1="716.9" y1="379.5" x2="676.0" y2="395.4" stroke="#e4e4e4" stroke-width="2.8"/>
<line x1="486.6" y1="320.1" x2="527.4" y2="361.5" stroke="#e4e4e4" stroke-width="2.8"/>
<line x1="673.1" y1="362.6" x2="632.3" y2="385.4" stroke="#e4e4e4" stroke-width="2.8"/>
<line x1="536.1" y1="323.6" x2="576.9" y2="372.8" stroke="#e4e4e4" stroke-width="2.8"/>
<line x1="623.6" y1="343.6" x2="582.8" y2="374.1" stroke="#e4e4e4" stroke-width="2.8"/>
<line x1="482.2" y1="319.8" x2="482.2" y2="351.2" stroke="#c8c8c8" stroke-width="1"/>
<line x1="579.9" y1="326.7" x2="579.9" y2="373.4" stroke="#c8c8c8" stroke-width="1"/>
<line x1="677.5" y1="364.3" x2="677.5" y2="395.7" stroke="#c8c8c8" stroke-width="1"/>
<line x1="345.5" y1="369.5" x2="491.2" y2="379.8" stroke="#ee8246" stroke-width="6"/>
<line x1="345.5" y1="372.0" x2="491.2" y2="382.2" stroke="#a8552a" stroke-width="1" stroke-dasharray="2 2"/>
<line x1="491.2" y1="379.8" x2="637.0" y2="436.0" stroke="#ee8246" stroke-width="6"/>
<line x1="491.2" y1="382.2" x2="637.0" y2="438.5" stroke="#a8552a" stroke-width="1" stroke-dasharray="2 2"/>
<line x1="345.5" y1="393.5" x2="637.0" y2="460.0" stroke="#ee8246" stroke-width="5.5"/>
<line x1="345.5" y1="395.7" x2="637.0" y2="462.2" stroke="#a8552a" stroke-width="1" stroke-dasharray="2 2"/>
<line x1="354.2" y1="370.1" x2="395.1" y2="404.8" stroke="#e4e4e4" stroke-width="2.8"/>
<line x1="628.3" y1="432.6" x2="587.4" y2="448.7" stroke="#e4e4e4" stroke-width="2.8"/>
<line x1="398.0" y1="373.2" x2="438.8" y2="414.8" stroke="#e4e4e4" stroke-width="2.8"/>
<line x1="584.5" y1="415.8" x2="543.7" y2="438.7" stroke="#e4e4e4" stroke-width="2.8"/>
<line x1="447.5" y1="376.7" x2="488.3" y2="426.1" stroke="#e4e4e4" stroke-width="2.8"/>
<line x1="535.0" y1="396.6" x2="494.2" y2="427.4" stroke="#e4e4e4" stroke-width="2.8"/>
<line x1="393.6" y1="372.9" x2="393.6" y2="404.5" stroke="#c8c8c8" stroke-width="1"/>
<line x1="491.2" y1="379.8" x2="491.2" y2="426.8" stroke="#c8c8c8" stroke-width="1"/>
<line x1="588.9" y1="417.4" x2="588.9" y2="449.0" stroke="#c8c8c8" stroke-width="1"/>
<line x1="375.0" y1="348.8" x2="520.8" y2="359.1" stroke="#e07a40" stroke-width="1.6"/>
<line x1="520.8" y1="359.1" x2="666.5" y2="415.3" stroke="#e07a40" stroke-width="1.6"/>
<line x1="404.6" y1="331.1" x2="550.3" y2="341.4" stroke="#e07a40" stroke-width="1.6"/>
<line x1="550.3" y1="341.4" x2="696.1" y2="397.6" stroke="#e07a40" stroke-width="1.6"/>
<line x1="463.6" y1="295.6" x2="609.4" y2="306.1" stroke="#e07a40" stroke-width="1.6"/>
<line x1="609.4" y1="306.1" x2="755.1" y2="362.1" stroke="#e07a40" stroke-width="1.6"/>
<line x1="493.2" y1="277.9" x2="638.9" y2="288.4" stroke="#e07a40" stroke-width="1.6"/>
<line x1="638.9" y1="288.4" x2="784.7" y2="344.4" stroke="#e07a40" stroke-width="1.6"/>
<line x1="552.2" y1="242.5" x2="698.0" y2="253.1" stroke="#e07a40" stroke-width="1.6"/>
<line x1="698.0" y1="253.1" x2="843.7" y2="309.0" stroke="#e07a40" stroke-width="1.6"/>
<line x1="581.8" y1="224.8" x2="727.5" y2="235.4" stroke="#e07a40" stroke-width="1.6"/>
<line x1="727.5" y1="235.4" x2="873.3" y2="291.3" stroke="#e07a40" stroke-width="1.6"/>
<line x1="345.5" y1="369.5" x2="482.7" y2="319.8" stroke="#d9773c" stroke-width="1"/>
<line x1="434.1" y1="316.3" x2="394.1" y2="372.9" stroke="#d9773c" stroke-width="1"/>
<line x1="588.4" y1="417.2" x2="725.6" y2="382.8" stroke="#d9773c" stroke-width="1"/>
<line x1="677.0" y1="364.1" x2="637.0" y2="436.0" stroke="#d9773c" stroke-width="1"/>
<line x1="522.7" y1="263.2" x2="659.9" y2="213.6" stroke="#d9773c" stroke-width="1"/>
<line x1="611.3" y1="210.0" x2="571.3" y2="266.7" stroke="#d9773c" stroke-width="1"/>
<line x1="765.6" y1="311.0" x2="902.8" y2="276.5" stroke="#d9773c" stroke-width="1"/>
<line x1="854.2" y1="257.9" x2="814.2" y2="329.7" stroke="#d9773c" stroke-width="1"/>
<line x1="342.3" y1="373.3" x2="616.9" y2="208.5" stroke="#46689a" stroke-width="1"/>
<line x1="341.1" y1="370.7" x2="615.7" y2="205.9" stroke="#c27fcf" stroke-width="2.6"/>
<line x1="390.9" y1="376.7" x2="665.5" y2="212.0" stroke="#46689a" stroke-width="1"/>
<line x1="389.7" y1="374.1" x2="664.3" y2="209.4" stroke="#c27fcf" stroke-width="2.6"/>
<line x1="439.4" y1="380.1" x2="714.1" y2="215.6" stroke="#46689a" stroke-width="1"/>
<line x1="438.2" y1="377.5" x2="712.9" y2="213.0" stroke="#c27fcf" stroke-width="2.6"/>
<line x1="481.5" y1="383.0" x2="756.1" y2="218.7" stroke="#46689a" stroke-width="1"/>
<line x1="480.3" y1="380.4" x2="754.9" y2="216.1" stroke="#c27fcf" stroke-width="2.6"/>
<line x1="494.6" y1="386.0" x2="769.2" y2="221.7" stroke="#46689a" stroke-width="1"/>
<line x1="493.4" y1="383.4" x2="768.0" y2="219.1" stroke="#c27fcf" stroke-width="2.6"/>
<line x1="536.6" y1="402.3" x2="811.3" y2="237.8" stroke="#46689a" stroke-width="1"/>
<line x1="535.4" y1="399.7" x2="810.1" y2="235.2" stroke="#c27fcf" stroke-width="2.6"/>
<line x1="585.2" y1="421.0" x2="859.8" y2="256.4" stroke="#46689a" stroke-width="1"/>
<line x1="584.0" y1="418.4" x2="858.6" y2="253.8" stroke="#c27fcf" stroke-width="2.6"/>
<line x1="486.8" y1="381.4" x2="761.5" y2="217.0" stroke="#2f3a52" stroke-width="5"/>
<line x1="486.8" y1="381.4" x2="761.5" y2="217.0" stroke="#7f96bb" stroke-width="1.2" stroke-dasharray="2 2"/>
<line x1="632.6" y1="434.7" x2="907.2" y2="269.9" stroke="#2c3548" stroke-width="5"/>
<line x1="632.6" y1="434.7" x2="907.2" y2="269.9" stroke="#8094b8" stroke-width="1.2" stroke-dasharray="2 2"/>
<line x1="632.6" y1="430.7" x2="907.2" y2="266.0" stroke="#9a74b0" stroke-width="1.2"/>
<line x1="660.0" y1="434.5" x2="754.8" y2="456.1" stroke="#c07878" stroke-width="4"/>
<line x1="748.6" y1="380.9" x2="843.4" y2="402.5" stroke="#c07878" stroke-width="4"/>
<line x1="637.6" y1="458.3" x2="725.0" y2="478.2" stroke="#86a6d6" stroke-width="7"/>
<line x1="637.6" y1="458.3" x2="725.0" y2="478.2" stroke="#c4d6ee" stroke-width="1"/>
<line x1="726.2" y1="404.7" x2="813.6" y2="424.7" stroke="#86a6d6" stroke-width="7"/>
<line x1="726.2" y1="404.7" x2="813.6" y2="424.7" stroke="#c4d6ee" stroke-width="1"/>
<line x1="814.8" y1="351.2" x2="902.2" y2="371.2" stroke="#86a6d6" stroke-width="7"/>
<line x1="814.8" y1="351.2" x2="902.2" y2="371.2" stroke="#c4d6ee" stroke-width="1"/>
<line x1="728.2" y1="477.1" x2="932.0" y2="353.9" stroke="#3d5274" stroke-width="8"/>
<line x1="728.2" y1="477.1" x2="932.0" y2="353.9" stroke="#8aa4cc" stroke-width="1.2"/>
<line x1="635.2" y1="587.1" x2="904.6" y2="422.7" stroke="#505050" stroke-width="3"/>
<line x1="635.2" y1="587.1" x2="904.6" y2="422.7" stroke="#c4c4c4" stroke-width="1"/>
<line x1="635.2" y1="555.4" x2="904.6" y2="391.6" stroke="#505050" stroke-width="3"/>
<line x1="635.2" y1="555.4" x2="904.6" y2="391.6" stroke="#c4c4c4" stroke-width="1"/>
<line x1="635.2" y1="523.7" x2="904.6" y2="360.5" stroke="#505050" stroke-width="3"/>
<line x1="635.2" y1="523.7" x2="904.6" y2="360.5" stroke="#c4c4c4" stroke-width="1"/>
<line x1="635.2" y1="492.1" x2="904.6" y2="329.4" stroke="#505050" stroke-width="3"/>
<line x1="635.2" y1="492.1" x2="904.6" y2="329.4" stroke="#c4c4c4" stroke-width="1"/>
<line x1="635.2" y1="460.3" x2="904.6" y2="298.2" stroke="#505050" stroke-width="3"/>
<line x1="635.2" y1="460.3" x2="904.6" y2="298.2" stroke="#c4c4c4" stroke-width="1"/>
<line x1="637.0" y1="625.0" x2="725.6" y2="397.7" stroke="#1d6e3c" stroke-width="2.4"/>
<line x1="637.0" y1="451.0" x2="725.6" y2="570.7" stroke="#1d6e3c" stroke-width="2.4"/>
<path d="M341.0,368.5h8M344.5,365.0v6.5M347.5,366.0l2,-2" stroke="#19c3d8" stroke-width="1.8" fill="none"/>
<path d="M389.6,371.9h8M393.1,368.4v6.5M396.1,369.4l2,-2" stroke="#19c3d8" stroke-width="1.8" fill="none"/>
<path d="M438.2,375.3h8M441.7,371.8v6.5M444.7,372.8l2,-2" stroke="#19c3d8" stroke-width="1.8" fill="none"/>
<path d="M480.2,378.3h8M483.7,374.8v6.5M486.7,375.8l2,-2" stroke="#19c3d8" stroke-width="1.8" fill="none"/>
<path d="M493.3,381.3h8M496.8,377.8v6.5M499.8,378.8l2,-2" stroke="#19c3d8" stroke-width="1.8" fill="none"/>
<path d="M535.3,397.5h8M538.8,394.0v6.5M541.8,395.0l2,-2" stroke="#19c3d8" stroke-width="1.8" fill="none"/>
<path d="M583.9,416.2h8M587.4,412.8v6.5M590.4,413.8l2,-2" stroke="#19c3d8" stroke-width="1.8" fill="none"/>
<path d="M370.5,350.8h8M374.0,347.3v6.5M377.0,348.3l2,-2" stroke="#19c3d8" stroke-width="1.8" fill="none"/>
<path d="M419.1,354.2h8M422.6,350.7v6.5M425.6,351.7l2,-2" stroke="#19c3d8" stroke-width="1.8" fill="none"/>
<path d="M467.7,357.6h8M471.2,354.1v6.5M474.2,355.1l2,-2" stroke="#19c3d8" stroke-width="1.8" fill="none"/>
<path d="M509.7,360.6h8M513.2,357.1v6.5M516.2,358.1l2,-2" stroke="#19c3d8" stroke-width="1.8" fill="none"/>
<path d="M522.8,363.6h8M526.3,360.1v6.5M529.3,361.1l2,-2" stroke="#19c3d8" stroke-width="1.8" fill="none"/>
<path d="M564.9,379.8h8M568.4,376.3v6.5M571.4,377.3l2,-2" stroke="#19c3d8" stroke-width="1.8" fill="none"/>
<path d="M613.5,398.5h8M617.0,395.0v6.5M620.0,396.0l2,-2" stroke="#19c3d8" stroke-width="1.8" fill="none"/>
<path d="M400.1,333.1h8M403.6,329.6v6.5M406.6,330.6l2,-2" stroke="#19c3d8" stroke-width="1.8" fill="none"/>
<path d="M448.6,336.5h8M452.1,333.0v6.5M455.1,334.0l2,-2" stroke="#19c3d8" stroke-width="1.8" fill="none"/>
<path d="M497.2,340.0h8M500.7,336.5v6.5M503.7,337.5l2,-2" stroke="#19c3d8" stroke-width="1.8" fill="none"/>
<path d="M539.3,342.9h8M542.8,339.4v6.5M545.8,340.4l2,-2" stroke="#19c3d8" stroke-width="1.8" fill="none"/>
<path d="M552.4,345.9h8M555.9,342.4v6.5M558.9,343.4l2,-2" stroke="#19c3d8" stroke-width="1.8" fill="none"/>
<path d="M594.4,362.1h8M597.9,358.6v6.5M600.9,359.6l2,-2" stroke="#19c3d8" stroke-width="1.8" fill="none"/>
<path d="M643.0,380.8h8M646.5,377.3v6.5M649.5,378.3l2,-2" stroke="#19c3d8" stroke-width="1.8" fill="none"/>
<path d="M429.6,315.3h8M433.1,311.8v6.5M436.1,312.8l2,-2" stroke="#19c3d8" stroke-width="1.8" fill="none"/>
<path d="M478.2,318.8h8M481.7,315.3v6.5M484.7,316.3l2,-2" stroke="#19c3d8" stroke-width="1.8" fill="none"/>
<path d="M526.8,322.3h8M530.3,318.8v6.5M533.3,319.8l2,-2" stroke="#19c3d8" stroke-width="1.8" fill="none"/>
<path d="M568.8,325.3h8M572.3,321.8v6.5M575.3,322.8l2,-2" stroke="#19c3d8" stroke-width="1.8" fill="none"/>
<path d="M581.9,328.3h8M585.4,324.8v6.5M588.4,325.8l2,-2" stroke="#19c3d8" stroke-width="1.8" fill="none"/>
<path d="M623.9,344.4h8M627.4,340.9v6.5M630.4,341.9l2,-2" stroke="#19c3d8" stroke-width="1.8" fill="none"/>
<path d="M672.5,363.1h8M676.0,359.6v6.5M679.0,360.6l2,-2" stroke="#19c3d8" stroke-width="1.8" fill="none"/>
<path d="M459.1,297.6h8M462.6,294.1v6.5M465.6,295.1l2,-2" stroke="#19c3d8" stroke-width="1.8" fill="none"/>
<path d="M507.7,301.1h8M511.2,297.6v6.5M514.2,298.6l2,-2" stroke="#19c3d8" stroke-width="1.8" fill="none"/>
<path d="M556.3,304.6h8M559.8,301.1v6.5M562.8,302.1l2,-2" stroke="#19c3d8" stroke-width="1.8" fill="none"/>
<path d="M598.3,307.6h8M601.8,304.1v6.5M604.8,305.1l2,-2" stroke="#19c3d8" stroke-width="1.8" fill="none"/>
<path d="M611.4,310.6h8M614.9,307.1v6.5M617.9,308.1l2,-2" stroke="#19c3d8" stroke-width="1.8" fill="none"/>
<path d="M653.5,326.8h8M657.0,323.3v6.5M660.0,324.3l2,-2" stroke="#19c3d8" stroke-width="1.8" fill="none"/>
<path d="M702.1,345.4h8M705.6,341.9v6.5M708.6,342.9l2,-2" stroke="#19c3d8" stroke-width="1.8" fill="none"/>
<path d="M488.7,279.9h8M492.2,276.4v6.5M495.2,277.4l2,-2" stroke="#19c3d8" stroke-width="1.8" fill="none"/>
<path d="M537.2,283.4h8M540.8,279.9v6.5M543.8,280.9l2,-2" stroke="#19c3d8" stroke-width="1.8" fill="none"/>
<path d="M585.8,286.9h8M589.3,283.4v6.5M592.3,284.4l2,-2" stroke="#19c3d8" stroke-width="1.8" fill="none"/>
<path d="M627.9,289.9h8M631.4,286.4v6.5M634.4,287.4l2,-2" stroke="#19c3d8" stroke-width="1.8" fill="none"/>
<path d="M641.0,292.9h8M644.5,289.4v6.5M647.5,290.4l2,-2" stroke="#19c3d8" stroke-width="1.8" fill="none"/>
<path d="M683.0,309.1h8M686.5,305.6v6.5M689.5,306.6l2,-2" stroke="#19c3d8" stroke-width="1.8" fill="none"/>
<path d="M731.6,327.7h8M735.1,324.2v6.5M738.1,325.2l2,-2" stroke="#19c3d8" stroke-width="1.8" fill="none"/>
<path d="M518.2,262.2h8M521.7,258.7v6.5M524.7,259.7l2,-2" stroke="#19c3d8" stroke-width="1.8" fill="none"/>
<path d="M566.8,265.7h8M570.3,262.2v6.5M573.3,263.2l2,-2" stroke="#19c3d8" stroke-width="1.8" fill="none"/>
<path d="M615.4,269.2h8M618.9,265.7v6.5M621.9,266.7l2,-2" stroke="#19c3d8" stroke-width="1.8" fill="none"/>
<path d="M657.4,272.2h8M660.9,268.7v6.5M663.9,269.7l2,-2" stroke="#19c3d8" stroke-width="1.8" fill="none"/>
<path d="M670.5,275.2h8M674.0,271.7v6.5M677.0,272.7l2,-2" stroke="#19c3d8" stroke-width="1.8" fill="none"/>
<path d="M712.5,291.4h8M716.0,287.9v6.5M719.0,288.9l2,-2" stroke="#19c3d8" stroke-width="1.8" fill="none"/>
<path d="M761.1,310.0h8M764.6,306.5v6.5M767.6,307.5l2,-2" stroke="#19c3d8" stroke-width="1.8" fill="none"/>
<path d="M547.7,244.5h8M551.2,241.0v6.5M554.2,242.0l2,-2" stroke="#19c3d8" stroke-width="1.8" fill="none"/>
<path d="M596.3,248.0h8M599.8,244.5v6.5M602.8,245.5l2,-2" stroke="#19c3d8" stroke-width="1.8" fill="none"/>
<path d="M644.9,251.5h8M648.4,248.0v6.5M651.4,249.0l2,-2" stroke="#19c3d8" stroke-width="1.8" fill="none"/>
<path d="M686.9,254.6h8M690.4,251.1v6.5M693.4,252.1l2,-2" stroke="#19c3d8" stroke-width="1.8" fill="none"/>
<path d="M700.0,257.6h8M703.5,254.1v6.5M706.5,255.1l2,-2" stroke="#19c3d8" stroke-width="1.8" fill="none"/>
<path d="M742.1,273.7h8M745.6,270.2v6.5M748.6,271.2l2,-2" stroke="#19c3d8" stroke-width="1.8" fill="none"/>
<path d="M790.7,292.3h8M794.2,288.8v6.5M797.2,289.8l2,-2" stroke="#19c3d8" stroke-width="1.8" fill="none"/>
<path d="M577.3,226.8h8M580.8,223.3v6.5M583.8,224.3l2,-2" stroke="#19c3d8" stroke-width="1.8" fill="none"/>
<path d="M625.8,230.3h8M629.3,226.8v6.5M632.3,227.8l2,-2" stroke="#19c3d8" stroke-width="1.8" fill="none"/>
<path d="M674.4,233.8h8M677.9,230.3v6.5M680.9,231.3l2,-2" stroke="#19c3d8" stroke-width="1.8" fill="none"/>
<path d="M716.5,236.9h8M720.0,233.4v6.5M723.0,234.4l2,-2" stroke="#19c3d8" stroke-width="1.8" fill="none"/>
<path d="M729.6,239.9h8M733.1,236.4v6.5M736.1,237.4l2,-2" stroke="#19c3d8" stroke-width="1.8" fill="none"/>
<path d="M771.6,256.0h8M775.1,252.5v6.5M778.1,253.5l2,-2" stroke="#19c3d8" stroke-width="1.8" fill="none"/>
<path d="M820.2,274.6h8M823.7,271.1v6.5M826.7,272.1l2,-2" stroke="#19c3d8" stroke-width="1.8" fill="none"/>
<path d="M606.8,209.0h8M610.3,205.5v6.5M613.3,206.5l2,-2" stroke="#19c3d8" stroke-width="1.8" fill="none"/>
<path d="M655.4,212.6h8M658.9,209.1v6.5M661.9,210.1l2,-2" stroke="#19c3d8" stroke-width="1.8" fill="none"/>
<path d="M704.0,216.1h8M707.5,212.6v6.5M710.5,213.6l2,-2" stroke="#19c3d8" stroke-width="1.8" fill="none"/>
<path d="M746.0,219.2h8M749.5,215.7v6.5M752.5,216.7l2,-2" stroke="#19c3d8" stroke-width="1.8" fill="none"/>
<path d="M759.1,222.2h8M762.6,218.7v6.5M765.6,219.7l2,-2" stroke="#19c3d8" stroke-width="1.8" fill="none"/>
<path d="M801.1,238.3h8M804.6,234.8v6.5M807.6,235.8l2,-2" stroke="#19c3d8" stroke-width="1.8" fill="none"/>
<path d="M849.7,256.9h8M853.2,253.4v6.5M856.2,254.4l2,-2" stroke="#19c3d8" stroke-width="1.8" fill="none"/>
<path d="M339.5,519.5h6v-4" stroke="#19c3d8" stroke-width="1.8" fill="none"/>
<path d="M339.5,487.8h6v-4" stroke="#19c3d8" stroke-width="1.8" fill="none"/>
<path d="M339.5,456.1h6v-4" stroke="#19c3d8" stroke-width="1.8" fill="none"/>
<path d="M339.5,424.5h6v-4" stroke="#19c3d8" stroke-width="1.8" fill="none"/>
<path d="M339.5,392.7h6v-4" stroke="#19c3d8" stroke-width="1.8" fill="none"/>
<path d="M428.1,465.4h6v-4" stroke="#19c3d8" stroke-width="1.8" fill="none"/>
<path d="M428.1,433.9h6v-4" stroke="#19c3d8" stroke-width="1.8" fill="none"/>
<path d="M428.1,402.4h6v-4" stroke="#19c3d8" stroke-width="1.8" fill="none"/>
<path d="M428.1,371.0h6v-4" stroke="#19c3d8" stroke-width="1.8" fill="none"/>
<path d="M428.1,339.4h6v-4" stroke="#19c3d8" stroke-width="1.8" fill="none"/>
<path d="M516.7,411.4h6v-4" stroke="#19c3d8" stroke-width="1.8" fill="none"/>
<path d="M516.7,380.0h6v-4" stroke="#19c3d8" stroke-width="1.8" fill="none"/>
<path d="M516.7,348.7h6v-4" stroke="#19c3d8" stroke-width="1.8" fill="none"/>
<path d="M516.7,317.5h6v-4" stroke="#19c3d8" stroke-width="1.8" fill="none"/>
<path d="M516.7,286.1h6v-4" stroke="#19c3d8" stroke-width="1.8" fill="none"/>
<path d="M605.3,357.3h6v-4" stroke="#19c3d8" stroke-width="1.8" fill="none"/>
<path d="M605.3,326.2h6v-4" stroke="#19c3d8" stroke-width="1.8" fill="none"/>
<path d="M605.3,295.0h6v-4" stroke="#19c3d8" stroke-width="1.8" fill="none"/>
<path d="M605.3,264.0h6v-4" stroke="#19c3d8" stroke-width="1.8" fill="none"/>
<path d="M605.3,232.8h6v-4" stroke="#19c3d8" stroke-width="1.8" fill="none"/>
<path d="M631.0,586.0h6v-4" stroke="#19c3d8" stroke-width="1.8" fill="none"/>
<path d="M631.0,554.3h6v-4" stroke="#19c3d8" stroke-width="1.8" fill="none"/>
<path d="M631.0,522.6h6v-4" stroke="#19c3d8" stroke-width="1.8" fill="none"/>
<path d="M631.0,491.0h6v-4" stroke="#19c3d8" stroke-width="1.8" fill="none"/>
<path d="M631.0,459.2h6v-4" stroke="#19c3d8" stroke-width="1.8" fill="none"/>
<path d="M719.6,531.9h6v-4" stroke="#19c3d8" stroke-width="1.8" fill="none"/>
<path d="M719.6,500.4h6v-4" stroke="#19c3d8" stroke-width="1.8" fill="none"/>
<path d="M719.6,468.9h6v-4" stroke="#19c3d8" stroke-width="1.8" fill="none"/>
<path d="M719.6,437.5h6v-4" stroke="#19c3d8" stroke-width="1.8" fill="none"/>
<path d="M719.6,405.9h6v-4" stroke="#19c3d8" stroke-width="1.8" fill="none"/>
<path d="M808.2,477.9h6v-4" stroke="#19c3d8" stroke-width="1.8" fill="none"/>
<path d="M808.2,446.5h6v-4" stroke="#19c3d8" stroke-width="1.8" fill="none"/>
<path d="M808.2,415.2h6v-4" stroke="#19c3d8" stroke-width="1.8" fill="none"/>
<path d="M808.2,384.0h6v-4" stroke="#19c3d8" stroke-width="1.8" fill="none"/>
<path d="M808.2,352.6h6v-4" stroke="#19c3d8" stroke-width="1.8" fill="none"/>
<path d="M896.8,423.8h6v-4" stroke="#19c3d8" stroke-width="1.8" fill="none"/>
<path d="M896.8,392.7h6v-4" stroke="#19c3d8" stroke-width="1.8" fill="none"/>
<path d="M896.8,361.5h6v-4" stroke="#19c3d8" stroke-width="1.8" fill="none"/>
<path d="M896.8,330.5h6v-4" stroke="#19c3d8" stroke-width="1.8" fill="none"/>
<path d="M896.8,299.3h6v-4" stroke="#19c3d8" stroke-width="1.8" fill="none"/>
<line x1="344.0" y1="354.0" x2="370.0" y2="357.6" stroke="#e00000" stroke-width="3.5"/>
<line x1="370.0" y1="357.6" x2="374.0" y2="392.0" stroke="#0018e0" stroke-width="3.5"/>
<line x1="333.0" y1="361.0" x2="344.0" y2="354.0" stroke="#10c010" stroke-width="3.0"/>
<line x1="359.0" y1="364.6" x2="370.0" y2="357.6" stroke="#10c010" stroke-width="3.0"/>
<line x1="363.0" y1="407.6" x2="370.7" y2="402.7" stroke="#10c010" stroke-width="2.5"/>
<line x1="337.0" y1="367.0" x2="357.0" y2="371.6" stroke="#10c010" stroke-width="1.6"/>
<line x1="337.0" y1="367.0" x2="342.0" y2="400.0" stroke="#10c010" stroke-width="1.6"/>
<line x1="357.0" y1="371.6" x2="361.0" y2="402.6" stroke="#10c010" stroke-width="1.6"/>
<line x1="342.0" y1="400.0" x2="361.0" y2="402.6" stroke="#10c010" stroke-width="1.6"/>
<line x1="333.0" y1="361.0" x2="337.0" y2="404.0" stroke="#0018e0" stroke-width="4.0"/>
<line x1="359.0" y1="364.6" x2="363.0" y2="407.6" stroke="#0018e0" stroke-width="4.0"/>
<line x1="333.0" y1="361.0" x2="359.0" y2="364.6" stroke="#e00000" stroke-width="4.0"/>
<line x1="337.0" y1="404.0" x2="363.0" y2="407.6" stroke="#e00000" stroke-width="4.0"/>
<line x1="531.0" y1="378.0" x2="555.0" y2="381.4" stroke="#e00000" stroke-width="4.6"/>
<line x1="555.0" y1="381.4" x2="557.0" y2="407.0" stroke="#0018e0" stroke-width="4.6"/>
<line x1="522.0" y1="383.0" x2="531.0" y2="378.0" stroke="#10c010" stroke-width="4.1"/>
<line x1="546.0" y1="386.4" x2="555.0" y2="381.4" stroke="#10c010" stroke-width="4.1"/>
<line x1="548.0" y1="418.4" x2="554.3" y2="414.9" stroke="#10c010" stroke-width="3.5999999999999996"/>
<line x1="526.0" y1="389.0" x2="544.0" y2="393.4" stroke="#10c010" stroke-width="1.6"/>
<line x1="526.0" y1="389.0" x2="529.0" y2="411.0" stroke="#10c010" stroke-width="1.6"/>
<line x1="544.0" y1="393.4" x2="546.0" y2="413.4" stroke="#10c010" stroke-width="1.6"/>
<line x1="529.0" y1="411.0" x2="546.0" y2="413.4" stroke="#10c010" stroke-width="1.6"/>
<line x1="522.0" y1="383.0" x2="524.0" y2="415.0" stroke="#0018e0" stroke-width="5.1"/>
<line x1="546.0" y1="386.4" x2="548.0" y2="418.4" stroke="#0018e0" stroke-width="5.1"/>
<line x1="522.0" y1="383.0" x2="546.0" y2="386.4" stroke="#e00000" stroke-width="5.1"/>
<line x1="524.0" y1="415.0" x2="548.0" y2="418.4" stroke="#e00000" stroke-width="5.1"/>
<line x1="605.0" y1="408.0" x2="625.0" y2="410.8" stroke="#e00000" stroke-width="3.8"/>
<line x1="625.0" y1="410.8" x2="627.0" y2="431.6" stroke="#0018e0" stroke-width="3.8"/>
<line x1="597.0" y1="413.0" x2="605.0" y2="408.0" stroke="#10c010" stroke-width="3.3"/>
<line x1="617.0" y1="415.8" x2="625.0" y2="410.8" stroke="#10c010" stroke-width="3.3"/>
<line x1="619.0" y1="441.8" x2="624.6" y2="438.3" stroke="#10c010" stroke-width="2.8"/>
<line x1="601.0" y1="419.0" x2="615.0" y2="422.8" stroke="#10c010" stroke-width="1.6"/>
<line x1="601.0" y1="419.0" x2="604.0" y2="435.0" stroke="#10c010" stroke-width="1.6"/>
<line x1="615.0" y1="422.8" x2="617.0" y2="436.8" stroke="#10c010" stroke-width="1.6"/>
<line x1="604.0" y1="435.0" x2="617.0" y2="436.8" stroke="#10c010" stroke-width="1.6"/>
<line x1="597.0" y1="413.0" x2="599.0" y2="439.0" stroke="#0018e0" stroke-width="4.3"/>
<line x1="617.0" y1="415.8" x2="619.0" y2="441.8" stroke="#0018e0" stroke-width="4.3"/>
<line x1="597.0" y1="413.0" x2="617.0" y2="415.8" stroke="#e00000" stroke-width="4.3"/>
<line x1="599.0" y1="439.0" x2="619.0" y2="441.8" stroke="#e00000" stroke-width="4.3"/>
<polygon points="925.0,345.0 940.0,336.0 948.0,340.0 948.0,470.0 933.0,479.0 925.0,474.0" fill="#6c6c40" stroke="none" stroke-width="1"/>
<polygon points="925.0,345.0 933.0,349.0 933.0,479.0 925.0,474.0" fill="#8a8a55" stroke="none" stroke-width="1"/>
<polygon points="925.0,345.0 940.0,336.0 948.0,340.0 933.0,349.0" fill="#a0a070" stroke="none" stroke-width="1"/>
<text x="320" y="568" fill="#3cc830" font-family="Liberation Sans" font-size="13">1</text>
<text x="311" y="553" fill="#3cc830" font-family="Liberation Sans" font-size="12">A</text>
<text x="466" y="603" fill="#3cc830" font-family="Liberation Sans" font-size="15">2</text>
<text x="613" y="632" fill="#3cc830" font-family="Liberation Sans" font-size="12">3</text>
<text x="908" y="452" fill="#3cc830" font-family="Liberation Sans" font-size="15">3</text>
<text x="656" y="631" fill="#3cc830" font-family="Liberation Sans" font-size="15">A</text>
<text x="742" y="577" fill="#3cc830" font-family="Liberation Sans" font-size="15">B</text>
<text x="831" y="523" fill="#3cc830" font-family="Liberation Sans" font-size="15">C</text>
<text x="919" y="469" fill="#3cc830" font-family="Liberation Sans" font-size="15">D</text></g></svg></div><!--/model-->
</body></html>
